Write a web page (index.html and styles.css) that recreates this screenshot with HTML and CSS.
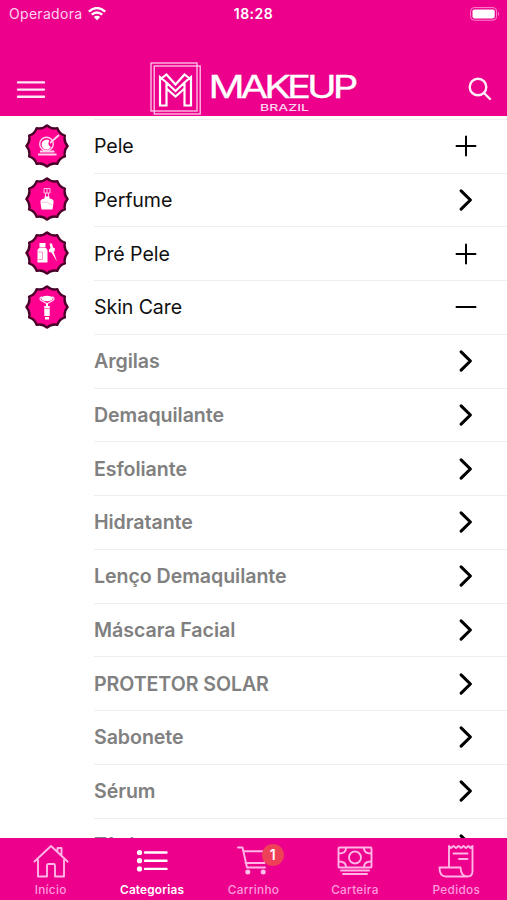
FILE: index.html
```html
<!DOCTYPE html>
<html lang="pt-BR">
<head>
<meta charset="utf-8">
<title>Makeup Brazil</title>
<link rel="stylesheet" href="styles.css">
</head>
<body>
<svg class="defs" aria-hidden="true">
  <symbol id="scallop" viewBox="-22 -22 44 44"><path d="M20.6 0Q16.600 4.450 17.84 10.3Q12.150 12.150 10.3 17.84Q4.450 16.600 0 20.6Q-4.450 16.600-10.3 17.84Q-12.150 12.150-17.84 10.3Q-16.600 4.450-20.6 0Q-16.600-4.450-17.84-10.3Q-12.150-12.150-10.3-17.84Q-4.450-16.600 0-20.6Q4.450-16.600 10.3-17.84Q12.150-12.150 17.84-10.3Q16.600-4.450 20.6 0Z" fill="#ff0090" stroke="#4a0028" stroke-width="2.4" stroke-linejoin="round"/></symbol>
  <symbol id="plus" viewBox="0 0 24 24"><path d="M2.5 12H21.5M12 2.5V21.5"/></symbol>
  <symbol id="minus" viewBox="0 0 24 24"><path d="M2.5 12H21.5"/></symbol>
  <symbol id="next" viewBox="0 0 24 24"><path d="M7.1 2.9L16.4 12L7.1 21.1" stroke-width="3.1"/></symbol>
</svg>
<div class="app">
  <header class="header">
    <div class="status">
      <div class="carrier"><span>Operadora</span>
        <svg width="18" height="14" viewBox="0 0 18 14" fill="none" stroke="#fff" stroke-width="2.3"><path d="M.8 4.6Q9-2.5 17.2 4.6M3.7 7.7Q9 3.2 14.3 7.7"/><path d="M5.8 10Q9 7.3 12.2 10L9 13.3Z" fill="#fff" stroke="none"/></svg>
      </div>
      <time>18:28</time>
      <svg class="battery" width="30" height="14" viewBox="0 0 30 14"><rect x=".6" y=".6" width="26" height="12.6" rx="3.6" fill="none" stroke="#ff87d0" stroke-width="1"/><rect x="2.5" y="2.4" width="22.2" height="9" rx="1.8" fill="#fff"/><path d="M28 4.8Q30 7 28 9Z" fill="#ff87d0"/></svg>
    </div>
    <div class="brandbar">
      <svg class="menu" width="30" height="20" viewBox="0 0 30 20" stroke="#ffe6f6" stroke-width="2.4" stroke-linecap="round"><path d="M2 2.4H28M2 9.6H28M2 16.8H28"/></svg>
      <svg class="logo" width="212" height="54" viewBox="0 0 212 54">
        <g fill="none" stroke="#ffc9ea" stroke-width="1.3"><rect x="1" y="1" width="46" height="48"/><rect x="4.2" y="4" width="46" height="48"/></g>
        <path d="M10 43.500V15L16.500 20.500V43.500ZM41 43.500V15L34.500 20.500V43.500ZM10 17.500L16.500 12.500L25.500 22.500L34.500 12.500L41 17.500M16.500 20.500L25.500 29L34.500 20.500M17 27L25.500 34.500L34 27" fill="none" stroke="#fff" stroke-width="2.200"/>
        <text transform="translate(58.500 35.600) scale(1.270 1)" class="wordmark" textLength="118" lengthAdjust="spacing">MAKEUP</text>
        <text x="110" y="49" class="subword" textLength="49" lengthAdjust="spacingAndGlyphs">BRAZIL</text>
      </svg>
      <svg class="search" width="24" height="24" viewBox="0 0 24 24" fill="none" stroke="#ffeef9" stroke-width="2.4" stroke-linecap="round"><circle cx="10" cy="10" r="8.3"/><path d="M16 16L22 22"/></svg>
    </div>
  </header>

  <main class="list">
    <div class="row"><div class="badge"><svg class="seal"><use href="#scallop"/></svg>
      <svg class="glyph" viewBox="-22 -22 44 44"><circle cx="-.5" cy="-2" r="6.8" fill="none" stroke="#ffd5ec" stroke-width="1.4"/><path d="M2.500-5.500A5 5 0 1 0 4 1A4 4 0 0 1 2.500-5.500Z" fill="#fff"/><path d="M3-3L12-11" stroke="#ffd5ec" stroke-width="1.7"/><path d="M-7 5.500H7.500M-9 8.500H9.500" stroke="#ffd5ec" stroke-width="1.8"/></svg></div>
      <div class="item"><span>Pele</span><svg class="action"><use href="#plus"/></svg></div></div>
    <div class="row"><div class="badge"><svg class="seal"><use href="#scallop"/></svg>
      <svg class="glyph" viewBox="-22 -22 44 44"><path d="M-3-10.500H3V-6H-3ZM0-11V-5.500M-1.500-6V-2M1.500-6V-2" fill="none" stroke="#ffc0e3" stroke-width="1"/><path d="M-2.500-2.500H2.500V-.5Q7.500 0 6.500 4L5.500 10.500H-5.500L-6.500 4Q-7.500 0-2.500-.5Z" fill="#fff"/><path d="M-6 3Q0 2 5.500 6" fill="none" stroke="#ffb0da" stroke-width=".8"/></svg></div>
      <div class="item"><span>Perfume</span><svg class="action"><use href="#next"/></svg></div></div>
    <div class="row"><div class="badge"><svg class="seal"><use href="#scallop"/></svg>
      <svg class="glyph" viewBox="-22 -22 44 44" fill="#fff"><path d="M-7.500-10H-1.500V-5.500H-7.500ZM-8-5H-1L.5-3V9.500H-9.500V-3Z"/><path d="M-9-1H-4.500V6.500H-9" fill="none" stroke="#ff76bf" stroke-width=".8"/><path d="M2.500-9.500L5-9.500L6-5.500L8-4.500L7.500-1.500L6.500-1.500L10 8.500L4.500-.5L2-1V-3.500L3.500-5Z"/></svg></div>
      <div class="item"><span>Pré Pele</span><svg class="action"><use href="#plus"/></svg></div></div>
    <div class="row"><div class="badge"><svg class="seal"><use href="#scallop"/></svg>
      <svg class="glyph" viewBox="-22 -22 44 44"><ellipse cx="0" cy="-8.500" rx="5.700" ry="2.700" fill="#fff"/><path d="M-5-10Q-8-9.500-6.500-7L0-3.200L6.500-7Q8-9.500 5-10" fill="none" stroke="#ffd5ec" stroke-width="1.300"/><path d="M0-4V0" stroke="#fff" stroke-width="2"/><path d="M-2.700-1H2.700V9H-2.700ZM-2 10H2V12.500H-2Z" fill="#fff"/><path d="M-2.700 1.500H2.700" stroke="#ff55b0" stroke-width=".8"/></svg></div>
      <div class="item"><span>Skin Care</span><svg class="action"><use href="#minus"/></svg></div></div>
    <div class="row sub"><div class="item"><span>Argilas</span><svg class="action"><use href="#next"/></svg></div></div>
    <div class="row sub"><div class="item"><span>Demaquilante</span><svg class="action"><use href="#next"/></svg></div></div>
    <div class="row sub"><div class="item"><span>Esfoliante</span><svg class="action"><use href="#next"/></svg></div></div>
    <div class="row sub"><div class="item"><span>Hidratante</span><svg class="action"><use href="#next"/></svg></div></div>
    <div class="row sub"><div class="item"><span>Lenço Demaquilante</span><svg class="action"><use href="#next"/></svg></div></div>
    <div class="row sub"><div class="item"><span>Máscara Facial</span><svg class="action"><use href="#next"/></svg></div></div>
    <div class="row sub"><div class="item"><span>PROTETOR SOLAR</span><svg class="action"><use href="#next"/></svg></div></div>
    <div class="row sub"><div class="item"><span>Sabonete</span><svg class="action"><use href="#next"/></svg></div></div>
    <div class="row sub"><div class="item"><span>Sérum</span><svg class="action"><use href="#next"/></svg></div></div>
    <div class="row sub"><div class="item"><span>Tônico</span><svg class="action"><use href="#next"/></svg></div></div>
  </main>

  <nav class="tabs">
    <div class="tab"><svg viewBox="0 0 36 36"><path d="M1.500 18.500L18 3L34.500 18.500M5 17V33.500H14V22.500Q14 21 15.500 21H20.500Q22 21 22 22.500V33.500H31V17M24.500 8.500V5H28.500V12.500"/></svg><span>Início</span></div>
    <div class="tab active"><svg viewBox="0 0 36 36"><path d="M11 9.500H32.500M11 17.700H32.500M11 25.900H32.500" stroke-width="2.400"/><g fill="#fff" stroke="none"><circle cx="5.500" cy="9.500" r="2.600"/><circle cx="5.500" cy="17.700" r="2.600"/><circle cx="5.500" cy="25.900" r="2.600"/></g></svg><span>Categorias</span></div>
    <div class="tab"><svg viewBox="0 0 36 36"><path d="M3 4.500H7.500L12 24.500H30M9 8.200H32M10.500 20H29.500L32 8.200"/><g fill="#ffc0e9" stroke="none"><circle cx="12.800" cy="29" r="2.500"/><circle cx="28.200" cy="29" r="2.500"/></g></svg><span>Carrinho</span><b class="count">1</b></div>
    <div class="tab"><svg viewBox="0 0 36 36"><rect x="1.500" y="4.500" width="33" height="20" rx="1"/><circle cx="18" cy="14.500" r="6"/><path d="M9 5Q9 10.500 2 10.500M27 5Q27 10.500 34 10.500M2 18.500Q9 18.500 9 24M34 18.500Q27 18.500 27 24M4 27.500H32M6 31H30"/></svg><span>Carteira</span></div>
    <div class="tab"><svg viewBox="0 0 36 36"><path d="M11 23.500V3L13 5L15.500 3L18 5L20.500 3L23 5L25.500 3L28 5L30.500 3L32.500 5L34.500 3V28Q34.500 33.500 29.500 33.500H8Q1.500 33.500 1.500 24.500H22.500Q23 33.500 29.500 33.500M15.500 10.500H29.500M21 16H29.500"/></svg><span>Pedidos</span></div>
  </nav>
</div>
</body>
</html>
```
FILE: styles.css
```css
* { box-sizing: border-box; }
body {
  margin: 0;
  background: #fff;
  font-family: Inter, "Liberation Sans", sans-serif;
}
.defs { position: absolute; width: 0; height: 0; }
.app {
  display: flex;
  flex-direction: column;
  width: 507px;
  height: 900px;
  overflow: hidden;
}
.header {
  flex: 0 0 115.5px;
  background: #ec008c;
  color: #ffd3ef;
}
.status {
  display: grid;
  grid-template-columns: 1fr auto 1fr;
  align-items: center;
  height: 27px;
  padding: 0 7px 0 9px;
  font-size: 14px;
}
.carrier { display: flex; align-items: center; gap: 6px; letter-spacing: .3px; }
.status time { margin-right: 2px; color: #fff; font-weight: 600; letter-spacing: .5px; }
.battery { justify-self: end; }
.brandbar {
  display: flex;
  padding: 35px 15px 0 16px;
}
.menu { margin-top: 18px; }
.logo { margin-left: 104px; }
.search { margin: 15px 0 0 auto; }
.wordmark { fill: #fff; stroke: #fff; stroke-width: .3px; font-size: 31.5px; font-weight: 400; }
.subword { fill: #ffd3ef; font-size: 9.5px; font-weight: 500; }

.list {
  flex: 1;
  min-height: 0;
  overflow: hidden;
  padding-top: 2.8px;
  background: #fff;
}
.row {
  display: grid;
  grid-template-columns: 94px 1fr;
  height: 53.76px;
}
.badge {
  display: grid;
  place-items: center;
}
.seal, .glyph { grid-area: 1 / 1; width: 44px; height: 44px; }
.item {
  grid-column: 2;
  display: flex;
  align-items: center;
  justify-content: space-between;
  padding-right: 29px;
  border-top: 1.5px solid #eee;
  color: #111;
  font-size: 19.6px;
  letter-spacing: -.1px;
}
.sub .item { color: #808080; font-weight: 600; letter-spacing: -.06px; }
.action {
  width: 24px;
  height: 24px;
  fill: none;
  stroke: #000;
  stroke-width: 2;
  stroke-linecap: round;
  stroke-linejoin: round;
}

.tabs {
  flex: 0 0 62px;
  display: grid;
  grid-template-columns: repeat(5, 1fr);
  background: #ec008c;
  color: #ff9cdc;
}
.tab {
  position: relative;
  display: flex;
  flex-direction: column;
  align-items: center;
  padding-top: 5px;
  font-size: 11.8px;
  font-weight: 500;
  letter-spacing: .3px;
}
.tab svg {
  width: 36px;
  height: 36px;
  fill: none;
  stroke: #ffb5e5;
  stroke-width: 1.9;
  stroke-linecap: round;
  stroke-linejoin: round;
}
.tab span { margin-top: 4px; line-height: 15px; }
.tab.active { color: #fff; font-weight: 600; letter-spacing: .2px; }
.tab.active svg { stroke: #fff; }
.count {
  position: absolute;
  top: 6px;
  left: 59px;
  width: 22px;
  height: 22px;
  border-radius: 50%;
  background: #ee4056;
  color: #fff;
  font-size: 14px;
  font-weight: 600;
  line-height: 22px;
  text-align: center;
}
```
